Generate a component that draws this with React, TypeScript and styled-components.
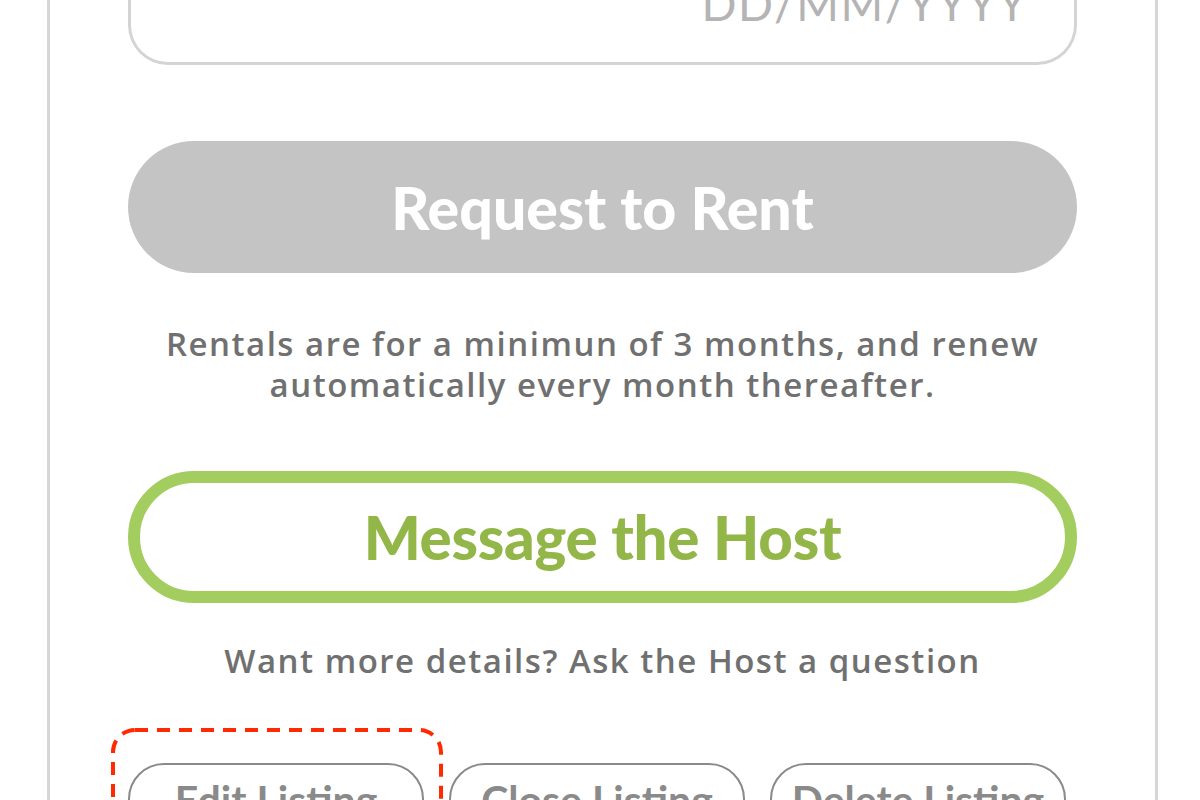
import styled, { createGlobalStyle } from 'styled-components';

const GlobalStyle = createGlobalStyle`
  html, body {
    margin: 0;
    padding: 0;
    background: #ffffff;
    overflow: hidden;
  }
`;

const Page = styled.div`
  width: 1200px;
  height: 800px;
  overflow: hidden;
`;

// 카드 (위쪽은 화면 밖으로 잘림)
const Card = styled.div`
  margin: -80px 0 0 47px;
  width: 1111px;
  box-sizing: border-box;
  border: 3px solid #d6d6d6;
  border-top: none;
  padding: 0 78px 120px;
  display: flex;
  flex-direction: column;
  align-items: stretch;
`;

const DateBox = styled.div`
  height: 145px;
  box-sizing: border-box;
  border: 3px solid #d4d4d4;
  border-top: none;
  border-radius: 0 0 40px 40px;
  display: flex;
  align-items: flex-end;
  justify-content: flex-end;
  padding: 0 46px 31px 0;
  font-family: Lato, 'Liberation Sans', sans-serif;
  font-size: 46px;
  font-weight: 400;
  color: #b4b4b4;
  letter-spacing: 1.5px;
`;

const PillButton = styled.button<{ $variant: 'filled' | 'outline' }>`
  height: 132px;
  box-sizing: border-box;
  border-radius: 66px;
  display: flex;
  align-items: center;
  justify-content: center;
  font-family: Lato, 'Liberation Sans', sans-serif;
  font-weight: 900;
  padding: 0;
  cursor: pointer;
  background: ${(p) => (p.$variant === 'filled' ? '#c4c4c4' : '#ffffff')};
  border: ${(p) => (p.$variant === 'filled' ? 'none' : '12px solid #a3cd5e')};
  color: ${(p) => (p.$variant === 'filled' ? '#ffffff' : '#93b648')};
  font-size: ${(p) => (p.$variant === 'filled' ? '59px' : '60px')};
  margin-top: ${(p) => (p.$variant === 'filled' ? '76px' : '66px')};
  letter-spacing: ${(p) => (p.$variant === 'filled' ? '0px' : '-0.3px')};
`;

const Note = styled.p<{ $top: number }>`
  margin: ${(p) => p.$top}px 0 0;
  text-align: center;
  font-family: 'Open Sans', 'Liberation Sans', sans-serif;
  font-weight: 600;
  font-size: 33px;
  line-height: 41px;
  color: #707070;
  letter-spacing: 1.5px;
`;

const ActionRow = styled.div`
  display: flex;
  gap: 25px;
  margin-top: 82px;
`;

const ActionSlot = styled.div`
  position: relative;
`;

// 선택 표시 (빨간 점선)
const Highlight = styled.svg`
  position: absolute;
  top: -35px;
  left: -17px;
  width: 334px;
  height: 140px;
  overflow: visible;
  pointer-events: none;
`;

const ActionButton = styled.button`
  width: 296px;
  height: 72px;
  box-sizing: border-box;
  border: 2px solid #8a8a8a;
  border-radius: 36px;
  background: #ffffff;
  font-family: Lato, 'Liberation Sans', sans-serif;
  font-weight: 700;
  font-size: 41px;
  color: #8a8a8a;
  display: flex;
  align-items: center;
  justify-content: center;
  padding: 0;
  cursor: pointer;
`;

export default function App() {
  return (
    <>
      <GlobalStyle />
      <Page>
        <Card>
          <DateBox>DD/MM/YYYY</DateBox>

          <PillButton $variant="filled">Request to Rent</PillButton>
          <Note $top={50}>
            Rentals are for a minimun of 3 months, and renew
            <br />
            automatically every month thereafter.
          </Note>

          <PillButton $variant="outline">Message the Host</PillButton>
          <Note $top={37}>Want more details? Ask the Host a question</Note>

          <ActionRow>
            <ActionSlot>
              <Highlight viewBox="0 0 334 140">
                <rect
                  x="2"
                  y="2"
                  width="328"
                  height="160"
                  rx="22"
                  fill="none"
                  stroke="#ff2a00"
                  strokeWidth="4"
                  strokeDasharray="13 9"
                />
              </Highlight>
              <ActionButton>Edit Listing</ActionButton>
            </ActionSlot>
            <ActionSlot>
              <ActionButton>Close Listing</ActionButton>
            </ActionSlot>
            <ActionSlot>
              <ActionButton>Delete Listing</ActionButton>
            </ActionSlot>
          </ActionRow>
        </Card>
      </Page>
    </>
  );
}
